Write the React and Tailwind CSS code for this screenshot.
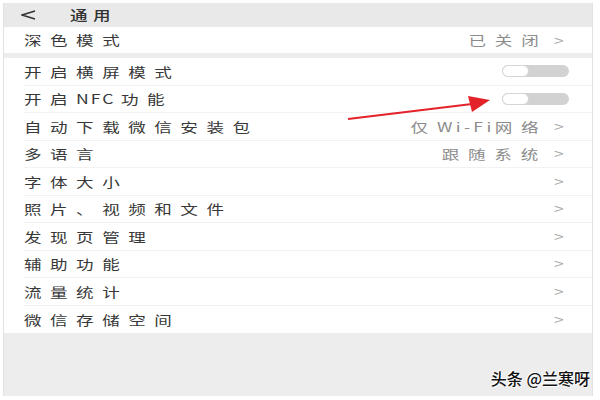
// 微信「通用」设置页（横向拉伸截图）
const font = { fontFamily: '"Noto Sans CJK SC", "Noto Sans", sans-serif' };

const rows = [
  { label: '开启横屏模式', toggle: true },
  { label: '开启NFC功能', toggle: true },
  { label: '自动下载微信安装包', value: '仅Wi-Fi网络' },
  { label: '多语言', value: '跟随系统' },
  { label: '字体大小' },
  { label: '照片、视频和文件' },
  { label: '发现页管理' },
  { label: '辅助功能' },
  { label: '流量统计' },
  { label: '微信存储空间', last: true },
];

// 英数字部分は字間を詰める
function Spaced({ text, latin }) {
  return text.split(/([A-Za-z-]+)/).map((part, i) =>
    /^[A-Za-z-]+$/.test(part) ? (
      <span key={i} className={latin}>{part}</span>
    ) : (
      part
    )
  );
}

function Toggle() {
  return (
    <div className="w-[67px] h-[12px] rounded-full bg-[#d2d2d2] flex items-center">
      <div className="w-[27px] h-[12px] rounded-full bg-white border border-[#d6d6d6]" />
    </div>
  );
}

function Label({ children }) {
  return (
    <span className="inline-block origin-left scale-x-135 text-[13px] tracking-[6.3px] text-[#383838]">
      <Spaced text={children} latin="tracking-[1.5px] mr-[4px]" />
    </span>
  );
}

function Value({ children }) {
  return (
    <span className="inline-block origin-right scale-x-135 text-[13px] tracking-[6.5px] text-[#8c8c8c]">
      <Spaced text={children} latin="tracking-[2.5px]" />
    </span>
  );
}

function Chevron() {
  return <span className="inline-block text-[14px] text-[#aaaaaa] ml-[8px] mr-[29px] scale-x-125">&gt;</span>;
}

function Row({ label, value, toggle, last }) {
  return (
    <div className="h-[27.5px] bg-white pl-[20px]">
      <div className={`h-full flex items-center justify-between ${last ? '' : 'border-b border-[#f2f2f2]'}`}>
        <Label>{label}</Label>
        {toggle ? (
          <div className="mr-[23px]"><Toggle /></div>
        ) : (
          <div className="flex items-center">
            {value && <Value>{value}</Value>}
            <Chevron />
          </div>
        )}
      </div>
    </div>
  );
}

export default function App() {
  return (
    <div className="relative w-[600px] h-[400px] bg-white pt-[3px] pl-[3px] pr-[7px] pb-[4px]" style={font}>
      <div className="h-full bg-[#ededed] flex flex-col border-r border-l border-[#e2e2e2]">
        {/* ヘッダー */}
        <div className="h-[24px] flex items-center pl-[17px] bg-[#e9e9e9]">
          <svg width="15" height="10" viewBox="0 0 15 10">
            <polyline points="14,1 1,5 14,9" fill="none" stroke="#333" strokeWidth="1.6" />
          </svg>
          <span className="ml-[34px] inline-block origin-left scale-x-135 text-[13px] tracking-[4px] text-[#333] font-medium">通用</span>
        </div>
        <div className="h-[26px] bg-white pl-[20px] flex items-center justify-between">
          <Label>深色模式</Label>
          <div className="flex items-center">
            <Value>已关闭</Value>
            <Chevron />
          </div>
        </div>
        <div className="h-[5px]" />
        <div className="flex flex-col">
          {rows.map((r) => (
            <Row key={r.label} {...r} />
          ))}
        </div>
      </div>

      {/* 赤い矢印 */}
      <svg className="absolute left-0 top-0" width="600" height="400">
        <line x1="348" y1="119" x2="472" y2="104" stroke="#e3222a" strokeWidth="2" />
        <polygon points="490,100 468,96 472,112" fill="#e3222a" />
      </svg>

      {/* 透かし */}
      <div className="absolute right-[10px] bottom-[10px] text-[16px] text-[#111] font-medium [text-shadow:1px_1px_0_#fff,-1px_-1px_0_#fff]">
        头条 @兰寒呀
      </div>
    </div>
  );
}
